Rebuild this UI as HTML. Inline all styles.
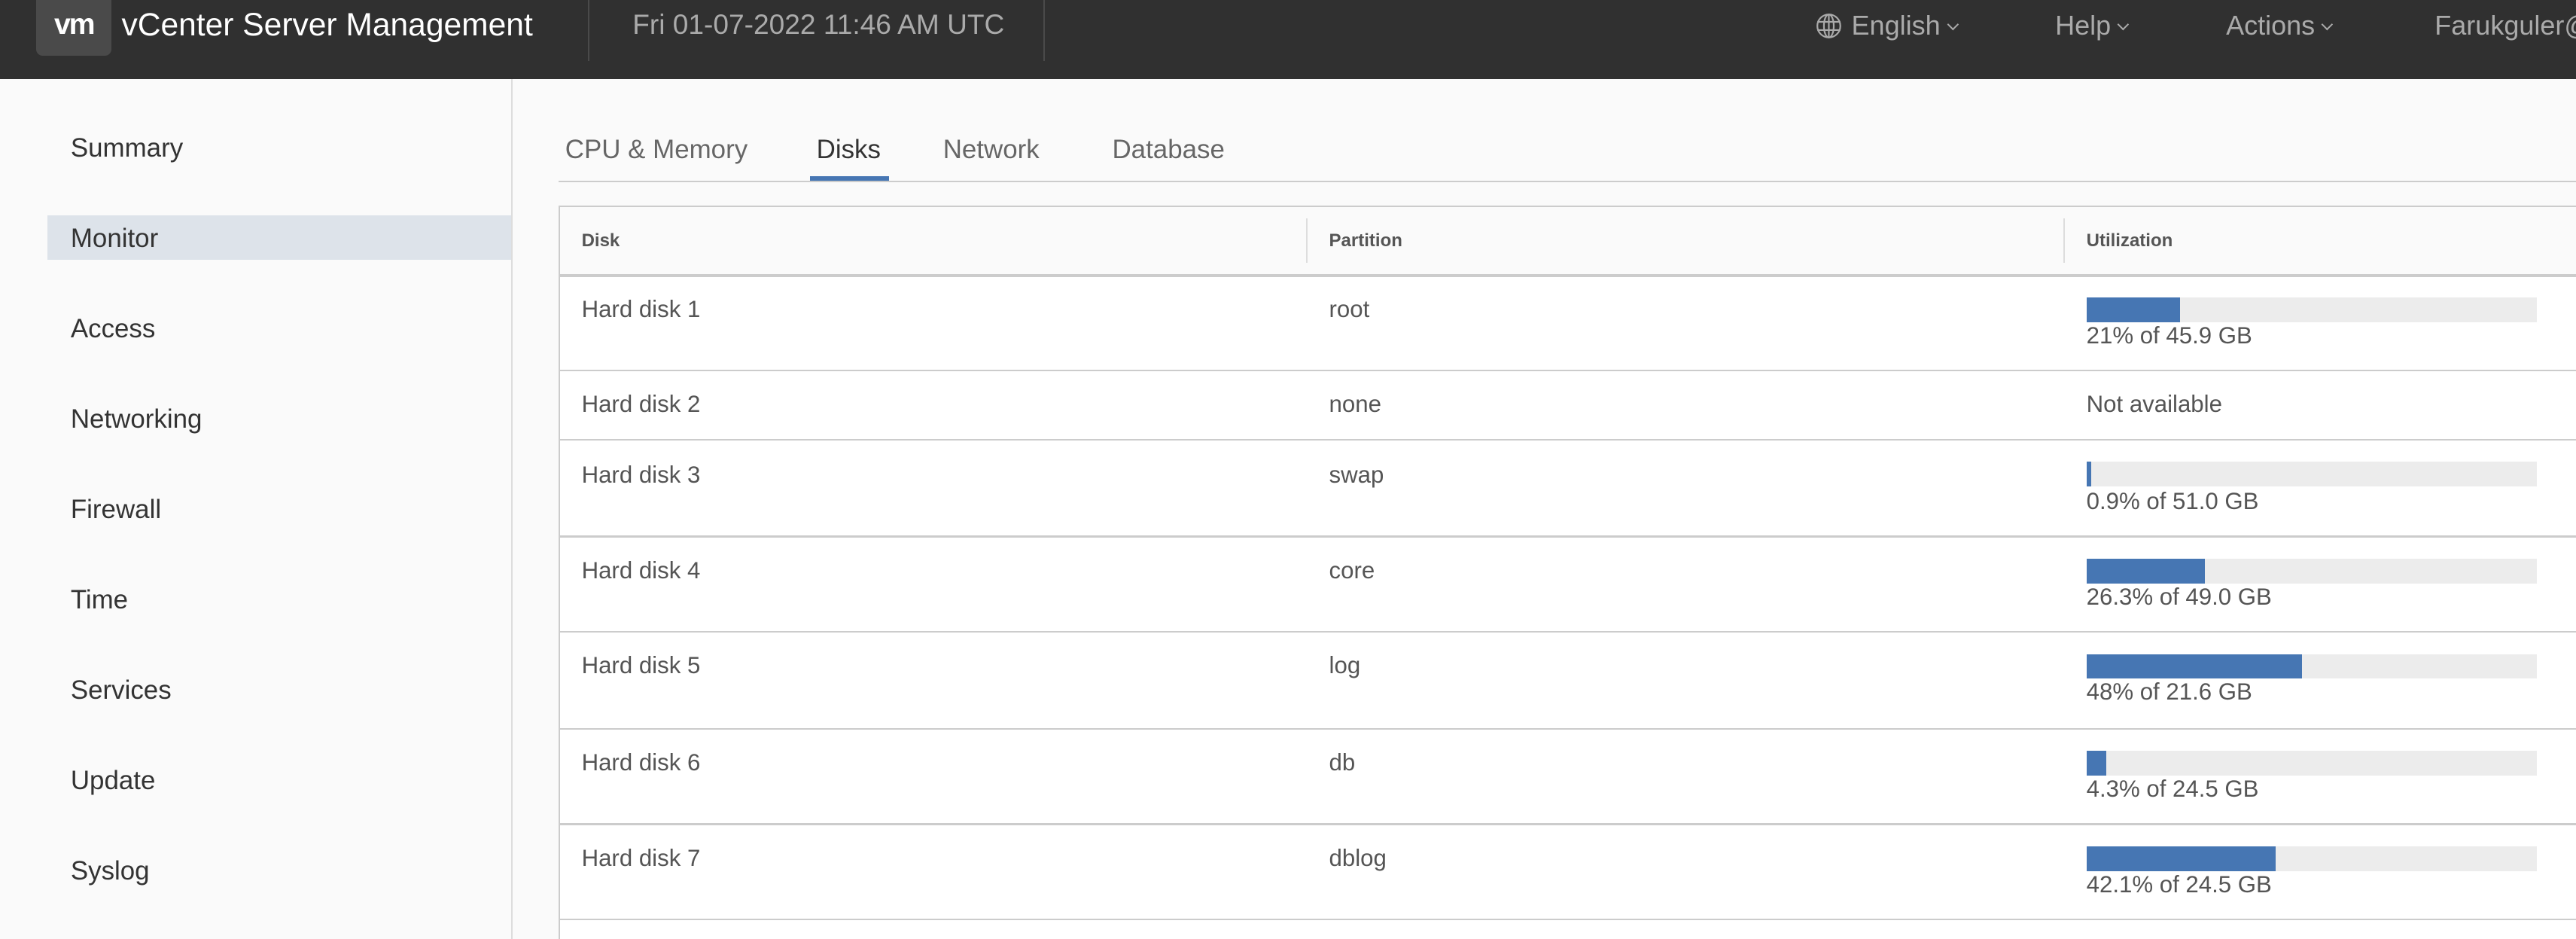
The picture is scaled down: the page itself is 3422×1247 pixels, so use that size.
<!DOCTYPE html>
<html><head><meta charset="utf-8"><style>
html,body{margin:0;padding:0;width:3422px;height:1247px;overflow:hidden;background:#fff}
#w{zoom:2.18239;position:relative;width:1568px;height:572px;font-family:"Liberation Sans",sans-serif;overflow:hidden;background:#fafafa}
.a{position:absolute;white-space:nowrap}
#hd{position:absolute;left:0;top:0;width:1568px;height:48px;background:#303030}
.nav{font-size:16px;color:#333;left:43px}
.tab{top:82px;font-size:16px;color:#666}
.th{font-size:11px;font-weight:bold;color:#555;top:140px}
.td{font-size:14.3px;color:#555}
.bar{position:absolute;left:1270px;width:274px;height:15px;background:#ececec}
.bar i{display:block;height:15px;background:#4676b3}
.hl{position:absolute;left:340px;width:1240px;height:1px;background:#ccc}
.car{display:inline-block;width:4px;height:4px;border-right:1px solid #aaa;border-bottom:1px solid #aaa;transform:rotate(45deg);margin-left:5px;position:relative;top:-4px}
</style></head><body><div id="w">
<div id="hd">
<div class="a" style="left:22px;top:0;width:46px;height:34px;background:#4a4a4a;border-radius:0 0 4px 4px;color:#fff;font-weight:bold;font-size:18px;text-align:center;line-height:30px;letter-spacing:-1px">vm</div>
<div class="a" style="left:74px;top:4px;font-size:19.5px;color:#fff">vCenter Server Management</div>
<div class="a" style="left:358px;top:0;width:1px;height:37px;background:#4a4a4a"></div>
<div class="a" style="left:385px;top:5px;font-size:17px;color:#aaa">Fri 01-07-2022 11:46 AM UTC</div>
<div class="a" style="left:635px;top:0;width:1px;height:37px;background:#4a4a4a"></div>
<svg class="a" style="left:1105px;top:8px" width="16" height="16" viewBox="0 0 16 16" fill="none" stroke="#aaa" stroke-width="1"><circle cx="8" cy="8" r="7"/><ellipse cx="8" cy="8" rx="3" ry="7"/><line x1="1" y1="5.5" x2="15" y2="5.5"/><line x1="1" y1="10.5" x2="15" y2="10.5"/><line x1="8" y1="1" x2="8" y2="15"/></svg>
<div class="a" style="left:1127px;top:6px;font-size:16.5px;color:#aaa">English<span class="car"></span></div>
<div class="a" style="left:1251px;top:6px;font-size:16.5px;color:#aaa">Help<span class="car"></span></div>
<div class="a" style="left:1355px;top:6px;font-size:16.5px;color:#aaa">Actions<span class="car"></span></div>
<div class="a" style="left:1482px;top:6px;font-size:16.5px;color:#aaa">Farukguler@</div>
</div>
<div class="a" style="left:311px;top:48px;width:1px;height:524px;background:#ddd"></div>
<div class="a" style="left:29px;top:131px;width:282px;height:27px;background:#dde3ea"></div>
<div class="a nav" style="top:81px">Summary</div>
<div class="a nav" style="top:136px">Monitor</div>
<div class="a nav" style="top:191px">Access</div>
<div class="a nav" style="top:246px">Networking</div>
<div class="a nav" style="top:301px">Firewall</div>
<div class="a nav" style="top:356px">Time</div>
<div class="a nav" style="top:411px">Services</div>
<div class="a nav" style="top:466px">Update</div>
<div class="a nav" style="top:521px">Syslog</div>
<div class="a tab" style="left:344px">CPU &amp; Memory</div>
<div class="a tab" style="left:497px;color:#333">Disks</div>
<div class="a tab" style="left:574px">Network</div>
<div class="a tab" style="left:677px">Database</div>
<div class="hl" style="top:110px"></div>
<div class="a" style="left:493px;top:107px;width:48px;height:3px;background:#4676b3"></div>
<div class="a" style="left:340px;top:125px;width:1240px;height:450px;background:#fff;border:1px solid #ccc;box-sizing:border-box"></div>
<div class="a" style="left:341px;top:126px;width:1240px;height:41px;background:#fafafa"></div>
<div class="a" style="left:795px;top:133px;width:1px;height:27px;background:#ddd"></div>
<div class="a" style="left:1256px;top:133px;width:1px;height:27px;background:#ddd"></div>
<div class="a th" style="left:354px">Disk</div>
<div class="a th" style="left:809px">Partition</div>
<div class="a th" style="left:1270px">Utilization</div>
<div class="hl" style="top:167px;height:1.5px"></div>
<div class="hl" style="top:225px"></div><div class="hl" style="top:267px"></div><div class="hl" style="top:326px"></div><div class="hl" style="top:384px"></div><div class="hl" style="top:443px"></div><div class="hl" style="top:501px"></div><div class="hl" style="top:559px"></div>

<div class="a td" style="left:354px;top:180px">Hard disk 1</div><div class="a td" style="left:809px;top:180px">root</div>
<div class="bar" style="top:181px"><i style="width:57px"></i></div><div class="a td" style="left:1270px;top:196px">21% of 45.9 GB</div>

<div class="a td" style="left:354px;top:238px">Hard disk 2</div><div class="a td" style="left:809px;top:238px">none</div>
<div class="a td" style="left:1270px;top:238px">Not available</div>

<div class="a td" style="left:354px;top:281px">Hard disk 3</div><div class="a td" style="left:809px;top:281px">swap</div>
<div class="bar" style="top:281px"><i style="width:3px"></i></div><div class="a td" style="left:1270px;top:297px">0.9% of 51.0 GB</div>

<div class="a td" style="left:354px;top:339px">Hard disk 4</div><div class="a td" style="left:809px;top:339px">core</div>
<div class="bar" style="top:340px"><i style="width:72px"></i></div><div class="a td" style="left:1270px;top:355px">26.3% of 49.0 GB</div>

<div class="a td" style="left:354px;top:397px">Hard disk 5</div><div class="a td" style="left:809px;top:397px">log</div>
<div class="bar" style="top:398px"><i style="width:131px"></i></div><div class="a td" style="left:1270px;top:413px">48% of 21.6 GB</div>

<div class="a td" style="left:354px;top:456px">Hard disk 6</div><div class="a td" style="left:809px;top:456px">db</div>
<div class="bar" style="top:457px"><i style="width:12px"></i></div><div class="a td" style="left:1270px;top:472px">4.3% of 24.5 GB</div>

<div class="a td" style="left:354px;top:514px">Hard disk 7</div><div class="a td" style="left:809px;top:514px">dblog</div>
<div class="bar" style="top:515px"><i style="width:115px"></i></div><div class="a td" style="left:1270px;top:530px">42.1% of 24.5 GB</div>
</div></body></html>
